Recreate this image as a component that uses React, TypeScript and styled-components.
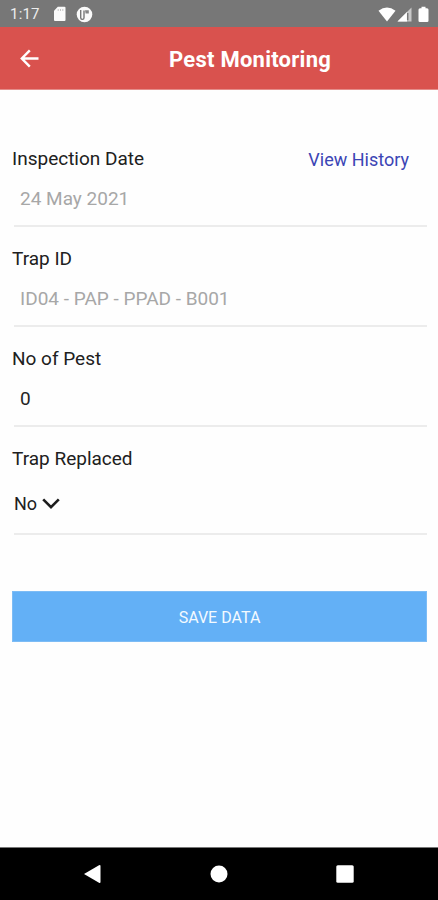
import React from "react";
import styled, { createGlobalStyle } from "styled-components";

const GlobalStyle = createGlobalStyle`
  *, *::before, *::after { box-sizing: border-box; }
  body { margin: 0; background: #fff; font-family: Roboto, "Liberation Sans", sans-serif; }
`;

const Screen = styled.div`
  width: 100%;
  height: 900px;
  display: flex;
  flex-direction: column;
  background: #fefefe;
`;

const StatusBar = styled.div`
  height: 27px;
  flex: none;
  display: flex;
  align-items: center;
  justify-content: space-between;
  background: #777;
  padding: 1px 8px 0 10px;
`;

const StatusGroup = styled.div`
  display: flex;
  align-items: center;
`;

const Clock = styled.span`
  width: 43px;
  font-size: 15px;
  letter-spacing: 0.2px;
  line-height: 18px;
  color: #ededed;
`;

const StatusIcon = styled.svg<{ $gap?: number }>`
  display: block;
  flex: none;
  margin-left: ${(p) => p.$gap ?? 0}px;
`;

const Header = styled.header`
  height: 63px;
  flex: none;
  display: grid;
  grid-template-columns: 62px 1fr;
  align-items: center;
  background: #d9524e;
  border-bottom: 1px solid #e48d8a;
`;

const BackButton = styled.button`
  display: flex;
  border: 0;
  background: none;
  padding: 0 0 0 20px;
`;

const Title = styled.h1`
  margin: 3px 0 0;
  padding-left: 107px;
  font-size: 22px;
  font-weight: 700;
  line-height: 28px;
  letter-spacing: 0.25px;
  white-space: nowrap;
  color: #fff;
`;

const Form = styled.main`
  flex: 1;
  display: flex;
  flex-direction: column;
  padding: 56px 11px 0 12px;
`;

const Field = styled.section<{ $height?: number }>`
  height: ${(p) => p.$height ?? 100}px;
  flex: none;
  display: flex;
  flex-direction: column;
`;

const FieldHead = styled.div`
  display: flex;
  justify-content: space-between;
  height: 26px;
  padding-right: 18px;
`;

const Label = styled.label`
  font-size: 19px;
  line-height: 26px;
  color: #202020;
`;

const HistoryLink = styled.a`
  font-size: 18px;
  line-height: 27px;
  color: #3b45b5;
`;

const Value = styled.div<{ $muted?: boolean }>`
  flex: 1;
  margin-left: 2px;
  padding: 14px 0 0 6px;
  font-size: 19px;
  line-height: 26px;
  color: ${(p) => (p.$muted ? "#a7a7a7" : "#252525")};
`;

const Divider = styled.hr`
  width: calc(100% - 2px);
  height: 2px;
  flex: none;
  margin: 0 0 19px 2px;
  border: 0;
  background: #ececec;
`;

const Picker = styled.div`
  flex: 1;
  display: flex;
  align-items: flex-start;
  gap: 5px;
  margin-left: 2px;
  padding-top: 19px;
  font-size: 18px;
  line-height: 26px;
  color: #202020;
`;

const Chevron = styled.svg`
  display: block;
  margin-top: 6px;
`;

const SaveButton = styled.button`
  height: 51px;
  flex: none;
  margin-top: 37px;
  padding: 2px 0 0;
  border: 1px solid #7dbcf5;
  background: #63b0f6;
  font-family: inherit;
  font-size: 16px;
  color: #f3faff;
`;

const NavBar = styled.nav`
  height: 53px;
  flex: none;
  display: grid;
  grid-template-columns: 101px 1fr 102px;
  align-items: center;
  border-top: 1px solid #777;
  background: #000;
`;

const NavItem = styled.div<{ $align: "start" | "center" | "end" }>`
  display: flex;
  justify-content: ${(p) => p.$align};
`;

export default function App() {
  return (
    <>
      <GlobalStyle />
      <Screen>
        <StatusBar>
          <StatusGroup>
            <Clock>1:17</Clock>
            <StatusIcon width="13" height="16" viewBox="0 0 13 16">
              <path d="M4.8 .8H11.5Q12.5 .8 12.5 1.8V14Q12.5 15 11.5 15H2Q1 15 1 14V4.8Z" fill="#fafafa" />
              <path d="M5.2 3v2M7.5 3v2M9.8 3v2" stroke="#c4c4c4" strokeWidth="1" />
            </StatusIcon>
            <StatusIcon $gap={10} width="17" height="17" viewBox="0 0 17 17">
              <circle cx="8.5" cy="8.5" r="7.8" fill="#fafafa" />
              <path d="M4.7 4V11.8Q4.9 13.4 6.5 13.4Q8 13.4 8 11.8V4.4" fill="none" stroke="#777" strokeWidth="1.4" />
              <path d="M9 4.2H12.8V7.5H9.6Z" fill="#858585" />
            </StatusIcon>
          </StatusGroup>
          <StatusGroup>
            <StatusIcon width="18" height="15" viewBox="0 0 18 15">
              <path d="M.5 3.8Q9-2.8 17.5 3.8L9 14.5Z" fill="#fff" />
            </StatusIcon>
            <StatusIcon $gap={1} width="15" height="15" viewBox="0 0 15 15">
              <path d="M.5 14.5L14.5 .5V14.5Z" fill="#c9c9c9" />
              <path d="M.5 14.5L10 5V14.5Z" fill="#fff" />
              <path d="M10.7 6v7.3" stroke="#777" strokeWidth="1.5" />
            </StatusIcon>
            <StatusIcon $gap={6} width="12" height="17" viewBox="0 0 12 17">
              <path d="M3.5 .8h4v1.4H9q1.5 0 1.5 1.5v11q0 1.3-1.3 1.3H1.8Q.5 16 .5 14.7v-11Q.5 2.2 2 2.2h1.5Z" fill="#fff" />
            </StatusIcon>
          </StatusGroup>
        </StatusBar>

        <Header>
          <BackButton aria-label="Back">
            <svg width="20" height="20" viewBox="0 0 20 20" fill="none" stroke="#fff" strokeWidth="2.4">
              <path d="M18.5 10.5H2M9.8 2.3L1.8 10.5L9.8 18.7" />
            </svg>
          </BackButton>
          <Title>Pest Monitoring</Title>
        </Header>

        <Form>
          <Field>
            <FieldHead>
              <Label>Inspection Date</Label>
              <HistoryLink>View History</HistoryLink>
            </FieldHead>
            <Value $muted>24 May 2021</Value>
            <Divider />
          </Field>
          <Field>
            <Label>Trap ID</Label>
            <Value $muted>ID04 - PAP - PPAD - B001</Value>
            <Divider />
          </Field>
          <Field>
            <Label>No of Pest</Label>
            <Value>0</Value>
            <Divider />
          </Field>
          <Field $height={108}>
            <Label>Trap Replaced</Label>
            <Picker>
              No
              <Chevron width="18" height="14" viewBox="0 0 18 14" fill="none" stroke="#1c1c1c" strokeWidth="2.6">
                <path d="M1.2 2.3L9 10.2L16.8 2.3" />
              </Chevron>
            </Picker>
            <Divider />
          </Field>
          <SaveButton>SAVE DATA</SaveButton>
        </Form>

        <NavBar>
          <NavItem $align="end">
            <svg width="18" height="20" viewBox="0 0 18 20">
              <path d="M1 10L16 1.3Q17.5 .6 17.5 2V18Q17.5 19.4 16 18.7Z" fill="#fff" />
            </svg>
          </NavItem>
          <NavItem $align="center">
            <svg width="18" height="18" viewBox="0 0 18 18">
              <circle cx="9" cy="9" r="8.5" fill="#fff" />
            </svg>
          </NavItem>
          <NavItem $align="start">
            <svg width="18" height="18" viewBox="0 0 18 18">
              <rect x=".3" y=".3" width="17.4" height="17.4" rx="1.5" fill="#fff" />
            </svg>
          </NavItem>
        </NavBar>
      </Screen>
    </>
  );
}
